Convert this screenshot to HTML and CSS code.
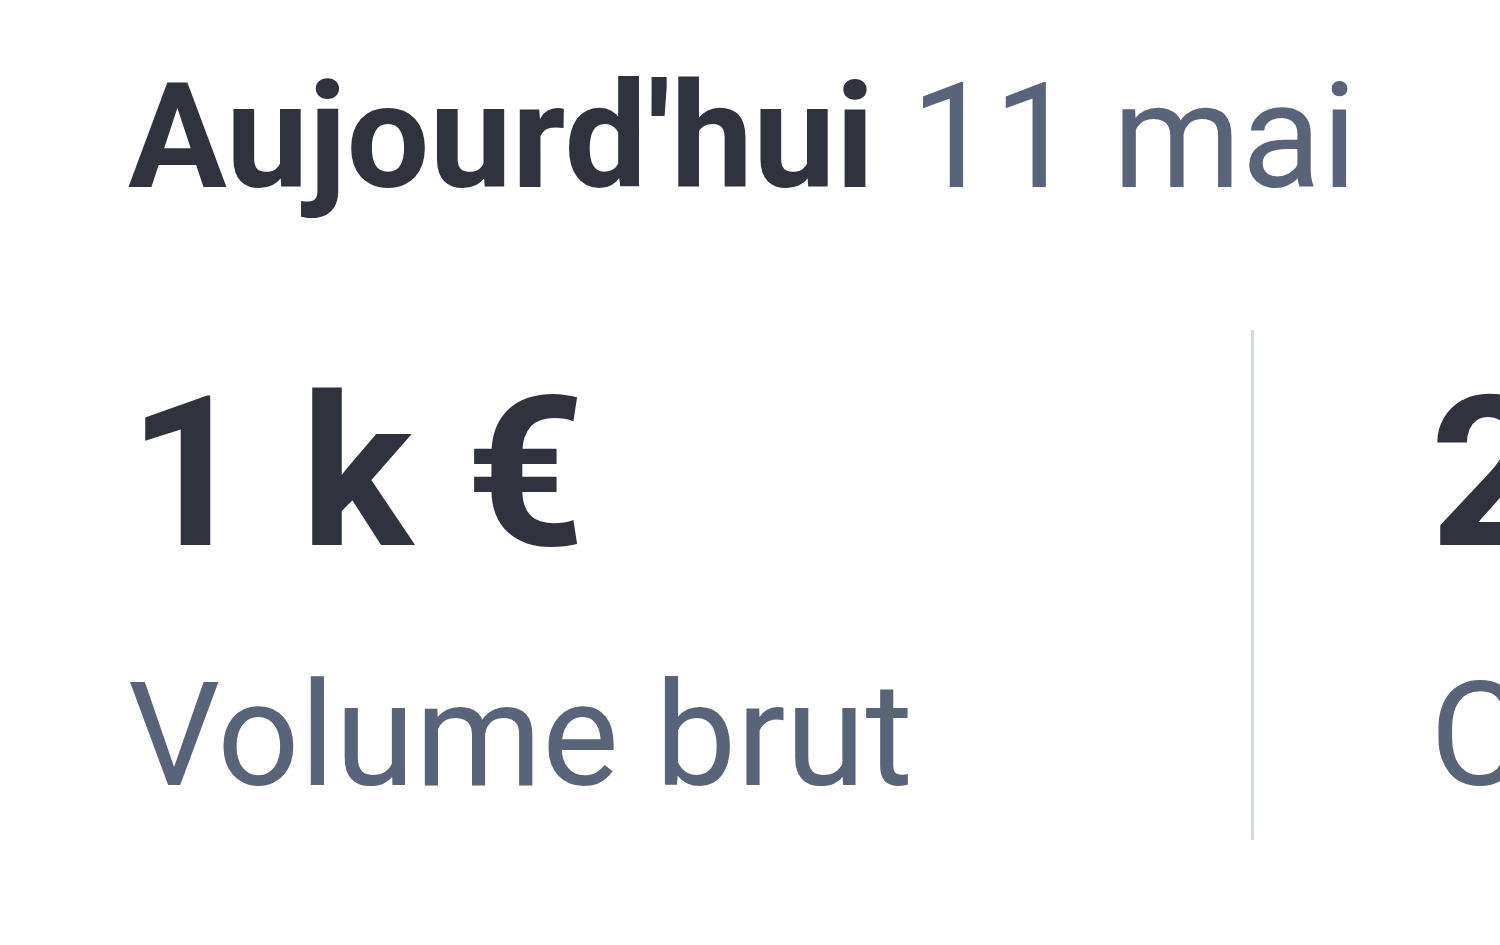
FILE: index.html
```html
<!DOCTYPE html>
<html lang="fr">
<head>
<meta charset="utf-8">
<title>Aujourd'hui</title>
<link rel="stylesheet" href="styles.css">
</head>
<body>
<main class="page">
  <h1 class="title"><span class="title-strong">Aujourd'hui</span> <span class="title-date">11 mai</span></h1>
  <section class="stats">
    <div class="stat">
      <div class="stat-value">1 k €</div>
      <div class="stat-label">Volume brut</div>
    </div>
    <div class="stat stat-next">
      <div class="stat-value">2</div>
      <div class="stat-label">Commandes</div>
    </div>
  </section>
</main>
</body>
</html>
```
FILE: styles.css
```css
html, body {
  margin: 0;
  padding: 0;
  background: #ffffff;
  overflow: hidden;
}
.page {
  width: 1500px;
  height: 945px;
  box-sizing: border-box;
  padding: 49px 0 0 128px;
  overflow: hidden;
  font-family: Roboto, "Liberation Sans", sans-serif;
}
.title {
  margin: 0;
  font-family: Roboto, "Liberation Sans", sans-serif;
  font-size: 147px;
  line-height: 176px;
  font-weight: normal;
  white-space: nowrap;
}
.title-strong {
  font-weight: 700;
  color: #30333d;
}
.title-date {
  font-weight: 400;
  color: #5a6478;
}
.stats {
  display: flex;
  margin-top: 105px;
  height: 510px;
}
.stat {
  flex: 0 0 auto;
  width: 1123px;
  box-sizing: border-box;
  white-space: nowrap;
}
.stat-next {
  border-left: 3px solid #d5d9e0;
  padding-left: 176px;
}
.stat-value {
  font-weight: 700;
  font-size: 210px;
  line-height: 250px;
  color: #30333d;
  margin-top: 18px;
}
.stat-label {
  font-weight: 400;
  font-size: 145px;
  line-height: 174px;
  color: #5a6478;
  margin-top: 50px;
}
```
